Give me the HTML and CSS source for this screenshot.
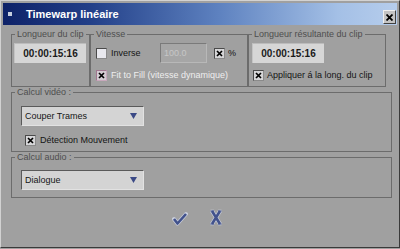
FILE: index.html
```html
<!DOCTYPE html>
<html>
<head>
<meta charset="utf-8">
<link rel="stylesheet" href="styles.css">
</head>
<body>
<div class="window">
  <div class="titlebar">
    <span class="sysicon"></span>
    <span class="title">Timewarp linéaire</span>
    <span class="close"><svg width="7" height="7" viewBox="0 0 7 7"><path d="M0.5 0.5 L6.5 6.5 M6.5 0.5 L0.5 6.5" stroke="#000" stroke-width="1.8"/></svg></span>
  </div>
  <div class="body">
    <div class="row1">
      <fieldset class="g g1">
        <legend>Longueur du clip</legend>
        <div class="inner1"><div class="time">00:00:15:16</div></div>
      </fieldset>
      <fieldset class="g g2">
        <legend>Vitesse</legend>
        <div class="inner2">
          <div class="line">
            <span class="cb"></span><span class="lbl lbl-inv">Inverse</span>
            <span class="num">100.0</span>
            <span class="cb checked pct-cb"><svg width="9" height="9" viewBox="0 0 9 9"><path d="M2 2 L7 7 M7 2 L2 7" stroke="#000" stroke-width="1.7"/></svg></span><span class="pct">%</span>
          </div>
          <div class="line line2">
            <span class="cb checked focus"><svg width="9" height="9" viewBox="0 0 9 9"><path d="M2 2 L7 7 M7 2 L2 7" stroke="#000" stroke-width="1.7"/></svg></span><span class="lbl light">Fit to Fill (vitesse dynamique)</span>
          </div>
        </div>
      </fieldset>
      <fieldset class="g g3">
        <legend>Longueur résultante du clip</legend>
        <div class="inner3">
          <div class="time">00:00:15:16</div>
          <div class="line line2 l3">
            <span class="cb checked"><svg width="9" height="9" viewBox="0 0 9 9"><path d="M2 2 L7 7 M7 2 L2 7" stroke="#000" stroke-width="1.7"/></svg></span><span class="lbl">Appliquer á la long. du clip</span>
          </div>
        </div>
      </fieldset>
    </div>
    <fieldset class="g g-video">
      <legend>Calcul vidéo :</legend>
      <div class="inner4">
        <div class="select"><span>Couper Trames</span><svg width="7" height="6" viewBox="0 0 7 6"><path d="M0 0 H7 L3.5 6 Z" fill="#3b4a86"/></svg></div>
        <div class="line l4">
          <span class="cb checked"><svg width="9" height="9" viewBox="0 0 9 9"><path d="M2 2 L7 7 M7 2 L2 7" stroke="#000" stroke-width="1.7"/></svg></span><span class="lbl">Détection Mouvement</span>
        </div>
      </div>
    </fieldset>
    <fieldset class="g g-audio">
      <legend>Calcul audio :</legend>
      <div class="inner5">
        <div class="select"><span>Dialogue</span><svg width="7" height="6" viewBox="0 0 7 6"><path d="M0 0 H7 L3.5 6 Z" fill="#3b4a86"/></svg></div>
      </div>
    </fieldset>
    <div class="buttons">
      <span class="btn"><svg width="16" height="17" viewBox="0 0 16 17"><path d="M2 10 L5.5 14.5 L14 5" fill="none" stroke="#c9cedc" stroke-width="4" stroke-linecap="round" stroke-linejoin="round"/><path d="M2 10 L5.5 14.5 L14 5" fill="none" stroke="#42528c" stroke-width="2.6" stroke-linejoin="round"/></svg></span>
      <span class="btn"><svg width="16" height="17" viewBox="0 0 16 17"><path d="M4 2 L12 15 M12 2 L4 15" fill="none" stroke="#c9cedc" stroke-width="4"/><path d="M2.5 2 H6 M10 2 H13.5 M2.5 15 H6 M10 15 H13.5" fill="none" stroke="#c9cedc" stroke-width="2.6"/><path d="M4 2 L12 15 M12 2 L4 15" fill="none" stroke="#42528c" stroke-width="2.6"/><path d="M2.5 2 H6 M10 2 H13.5 M2.5 15 H6 M10 15 H13.5" fill="none" stroke="#42528c" stroke-width="1.2"/></svg></span>
    </div>
  </div>
</div>
</body>
</html>
```
FILE: styles.css
```css
* { box-sizing: border-box; }
html, body { margin: 0; padding: 0; }
body {
  width: 400px;
  height: 249px;
  overflow: hidden;
  background: #a0a0a0;
  font-family: "Liberation Sans", Arial, sans-serif;
  font-size: 9px;
  color: #141414;
}
.window {
  width: 400px;
  height: 248px;
  border: 1px solid;
  border-color: #d2d2d2 #3a3a3a #3a3a3a #d2d2d2;
  padding: 2px;
  display: flex;
  flex-direction: column;
  background: #a0a0a0;
}
.titlebar {
  height: 22px;
  flex: none;
  display: flex;
  align-items: center;
  padding-left: 5px;
  background: linear-gradient(to right, #0e2268 0%, #223f88 22%, #5e82c0 55%, #a4c0e6 85%, #b6cdec 100%);
}
.sysicon {
  width: 4px;
  height: 4px;
  background: #c6cedf;
  margin-right: 14px;
}
.title {
  color: #fff;
  font-weight: bold;
  font-size: 11px;
  flex: 1;
}
.close {
  width: 13px;
  height: 14px;
  align-self: flex-end;
  margin: 0 1px 1px 0;
  background: #c4c4c4;
  border: 1px solid;
  border-color: #f0f0f0 #404040 #404040 #f0f0f0;
  display: flex;
  align-items: center;
  justify-content: center;
}
.body {
  flex: 1;
  padding: 4px 5px 0 8px;
  display: flex;
  flex-direction: column;
}
.row1 { display: flex; }
fieldset.g {
  margin: 0;
  padding: 0;
  min-width: 0;
  border: 1px solid #6c6c6c;
}
legend {
  padding: 0 2px;
  margin-left: 3px;
  line-height: 10px;
  color: #4e4e4e;
  font-size: 9px;
}
.g1 { width: 79px; height: 58px; }
.g2 { width: 158px; height: 58px; margin-left: 3px; }
.g3 { width: 138px; height: 58px; margin-left: 2px; }
.inner1 { padding: 4px 0 0 2px; }
.inner2 { padding: 4px 0 0 5px; }
.inner3 { padding: 4px 0 0 3px; }
.time {
  width: 72px;
  height: 20px;
  background: #d6d6d6;
  border-top: 1px solid #bcbcbc;
  border-left: 1px solid #c4c4c4;
  font-weight: bold;
  font-size: 10px;
  color: #1a1a1a;
  display: flex;
  align-items: center;
  justify-content: center;
}
.line {
  height: 20px;
  display: flex;
  align-items: center;
}
.line2 { margin-top: 2px; }
.l3 { padding-left: 1px; }
.cb {
  width: 11px;
  height: 11px;
  flex: none;
  border: 1px solid;
  border-color: #4a4a4a #8a8a8a #8a8a8a #4a4a4a;
  background: #e8e8ee;
  display: flex;
  align-items: center;
  justify-content: center;
}
.cb.checked { background: #d6d6d8; }
.cb.focus { border-color: #a07890 #c8a8bc #c8a8bc #a07890; background: #d4ccd2; }
.lbl { margin-left: 4px; white-space: nowrap; }
.l3 .lbl { margin-left: 3px; }
.lbl-inv { width: 49px; }
.light { color: #eeeeee; }
.num {
  width: 47px;
  height: 20px;
  border: 1px solid;
  border-color: #7a7a7a #b8b8b8 #b8b8b8 #7a7a7a;
  background: #a6a6a6;
  color: #c6c6c6;
  padding-left: 3px;
  display: flex;
  align-items: center;
}
.pct-cb { margin-left: 7px; }
.pct { margin-left: 3px; }
.g-video { height: 65px; margin-top: 1px; }
.g-audio { height: 46px; margin-top: 7px; }
.inner4 { padding: 9px 0 0 9px; }
.inner5 { padding: 8px 0 0 9px; }
.select {
  width: 123px;
  height: 20px;
  background: #d4d4d4;
  border: 1px solid;
  border-color: #5a5a5a #e2e2e2 #e2e2e2 #5a5a5a;
  padding: 0 6px 0 3px;
  display: flex;
  align-items: center;
  justify-content: space-between;
}
.l4 { margin-top: 4px; padding-left: 4px; }
.buttons {
  display: flex;
  justify-content: center;
  gap: 20px;
  margin-top: 11px;
  padding-right: 7px;
}
.btn { width: 16px; height: 17px; display: flex; }
```
